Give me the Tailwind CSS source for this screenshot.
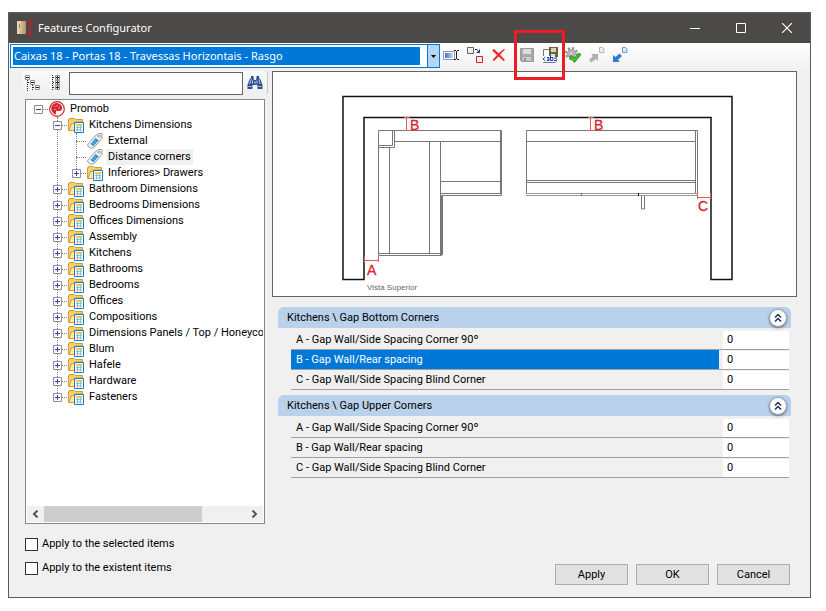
<!DOCTYPE html>
<html lang="en">
<head>
    <meta charset="UTF-8">
    <meta name="viewport" content="width=device-width, initial-scale=1.0">
    <title>Features Configurator</title>
    <script src="https://cdn.jsdelivr.net/npm/@tailwindcss/browser@4"></script>
</head>
<body class="bg-white h-screen min-h-[500px] pt-3 pb-[13px] pl-2 pr-[15px] font-[Roboto,'Liberation_Sans',sans-serif] text-[11px] leading-4 text-black">

    <!-- shared icons -->
    <svg class="hidden">
        <symbol id="folder" viewBox="0 0 16 16">
            <path d="M.5 13.500V2.500h1v-1h5l1 1h7v4" fill="#f7d06a" stroke="#d39a3c"/>
            <path d="M1 13.500 3.500 6.500h2.500l1-1.500h7.500v8.500z" fill="#fde9a3" stroke="#d39a3c"/>
            <path d="M6.500 5.500h9v10h-9z" fill="#fff" stroke="#1583bf"/>
            <path d="M8 7h6v2H8z" fill="#f5c24a"/>
            <path d="M9.500 9v5.500M12.500 9v5.500M8 10.500h6M8 13h6" stroke="#8fb9d8" fill="none"/>
        </symbol>
        <symbol id="tag" viewBox="0 0 16 16">
            <path d="M.8 11.500 8 3l4-2.500h2.500l.5.8v4L8 13.500l-3 1.700H3.500L.8 13z" fill="#f4f4f4" stroke="#8c8c8c" stroke-width=".9"/>
            <path d="m3.500 11 5-6 3.200 2.400-5.200 5.800z" fill="#2d8fd0"/>
            <path d="m5 9.300 3.200 2.400M6.700 7.300l3.200 2.400" stroke="#a9d5f2" stroke-width=".7"/>
            <circle cx="12.300" cy="3.300" r="1.100" fill="#fff" stroke="#888" stroke-width=".8"/>
        </symbol>
        <symbol id="promob" viewBox="0 0 16 16">
            <circle cx="8" cy="8" r="7.300" fill="#fff" stroke="#d2232f" stroke-width="1.200"/>
            <path d="M9 2.200c-4-.6-7 2.300-6.700 5.800.2 3 2.200 5.200 5 5.700-.8-1.500-.7-3 .3-4.200 1.300.8 3.500.9 4.700-.3 1.500-1.500 1.500-5.300-3.300-7z" fill="#d2232f"/>
            <path d="m5 5 1.500 1.200M8 3.800v2M11 5.200 9.500 6.500M5 8.500h1.700M10.500 8 9.200 7.500" stroke="#f6b6ba" stroke-width=".8"/>
        </symbol>
        <symbol id="chevrons" viewBox="0 0 16 16">
            <path d="m5 7.500 3-3 3 3M5 11.500l3-3 3 3" fill="none" stroke="#1c2f66" stroke-width="1.500"/>
        </symbol>
    </svg>

    <div class="relative h-full flex flex-col border border-[#5b5b5b] bg-[#f0f0f0]">

        <!-- title bar -->
        <header class="h-[30px] shrink-0 flex items-center bg-[#4c4a48] text-white">
            <svg class="w-4 h-4 ml-2" viewBox="0 0 16 16">
                <defs><linearGradient id="wood"><stop stop-color="#f2dcc0"/><stop offset="1" stop-color="#b58e62"/></linearGradient></defs>
                <path d="M0 1h9v13H0z" fill="url(#wood)"/>
                <path d="M2 4h1v4H2z" fill="#888"/>
                <path d="M11 1.500h5M11 14.500h5M13.500 2v12M11.500 4.500l2-2 2 2M11.500 11.500l2 2 2-2" fill="none" stroke="#e0101e"/>
            </svg>
            <h1 class="flex-1 ml-[5px] font-['Noto_Sans','Open_Sans',sans-serif]">Features Configurator</h1>
            <button class="w-[46px] h-full grid place-items-center" aria-label="Minimize">
                <svg class="w-[10px] h-[10px]" viewBox="0 0 10 10"><path d="M0 5.500h10" stroke="#fff"/></svg>
            </button>
            <button class="w-[46px] h-full grid place-items-center" aria-label="Maximize">
                <svg class="w-[10px] h-[10px]" viewBox="0 0 10 10"><path d="M.5.5h9v9h-9z" fill="none" stroke="#fff"/></svg>
            </button>
            <button class="w-[46px] h-full grid place-items-center" aria-label="Close">
                <svg class="w-[10px] h-[10px]" viewBox="0 0 10 10"><path d="m0 0 10 10M10 0 0 10" stroke="#fff" stroke-width="1.200"/></svg>
            </button>
        </header>

        <!-- main toolbar -->
        <div class="h-7 shrink-0 flex items-start pl-px bg-linear-to-b from-white to-[#f0f0f0]">
            <div class="flex w-[430px] h-6 mt-px border border-[#0078d7] bg-white">
                <select aria-label="Configuration" class="appearance-none flex-1 min-w-0 m-[2px] mr-[7px] bg-[#0078d7] text-white font-['Noto_Sans','Open_Sans',sans-serif] leading-4 px-px outline-none">
                    <option>Caixas 18 - Portas 18 - Travessas Horizontais - Rasgo</option>
                </select>
                <span class="w-3 grid place-items-center border-l border-[#0078d7] bg-[#b3d7f3]">
                    <svg class="w-[5px] h-[3px]" viewBox="0 0 5 3"><path d="M0 0h5L2.500 3z"/></svg>
                </span>
            </div>
            <div class="flex items-center gap-2 h-6 ml-[3px]">
                <button aria-label="Rename">
                    <svg class="w-4 h-4" viewBox="0 0 16 16">
                        <defs><linearGradient id="field"><stop stop-color="#3a73cf"/><stop offset="1" stop-color="#c4dafa"/></linearGradient></defs>
                        <path d="M.5 4.500h11v8H.5z" fill="#fff" stroke="#8a97ab"/>
                        <path d="M2 6h8v5H2z" fill="url(#field)"/>
                        <path d="M11 3.500h2M14 3.500h2M13.500 4v8M11 12.500h2M14 12.500h2" fill="none" stroke="#222"/>
                    </svg>
                </button>
                <button aria-label="Replace">
                    <svg class="w-4 h-4" viewBox="0 0 16 16">
                        <path d="M.5.5h6v6h-6z" fill="#eee" stroke="#6c6060"/>
                        <path d="M9.500 9.500h6v6h-6z" fill="#e8eef4" stroke="#e01b1b"/>
                        <path d="M8 2.500h2l1 1.500 1 1M12.500 2.500v3h-3" fill="none" stroke="#17375e"/>
                    </svg>
                </button>
                <button aria-label="Delete">
                    <svg class="w-4 h-4" viewBox="0 0 16 16">
                        <path d="M1 3.500 3 2l4.500 4.200L13 2l1 .5-5 5.300 5 5.200-1.500 1-5-4.500L3 14l-1.500-1L6 8z" fill="#ee2a24"/>
                    </svg>
                </button>
                <span class="w-px h-4 -ml-px bg-[#c8c8c8]"></span>
                <button aria-label="Save" class="-ml-1">
                    <svg class="w-4 h-4" viewBox="0 0 16 16">
                        <path d="M1.500 1.500h13v13h-12l-1-1z" fill="#a9a9a9" stroke="#999"/>
                        <path d="M4 2h8v5H4z" fill="#dcdcdc"/>
                        <path d="M4 10h8v4H4z" fill="#c9c9c9"/>
                        <path d="M5 11h2v3H5z" fill="#929292"/>
                    </svg>
                </button>
                <button aria-label="Save as" class="-ml-px">
                    <svg class="w-4 h-4" viewBox="0 0 16 16">
                        <path d="M1.500 2.500h13v12l-1 1h-12z" fill="#fff" stroke="#777"/>
                        <path d="M7 0h9v10H7z" fill="#66633f"/>
                        <path d="M9 1h5v4H9z" fill="#d8d4b4"/>
                        <path d="M9 7h4v2H9z" fill="#ddd"/>
                        <path d="M1 9h12v6H1z" fill="#fff"/>
                        <path d="M3.500 10 1 12l2.500 2M5 10.500h2v3H5M5 12h2M8.500 9v5M9 13.500h2v-3H9M14 11h-2M14 13.500h-2" fill="none" stroke="#1b3fd0"/>
                    </svg>
                </button>
                <button aria-label="Validate" class="-ml-px">
                    <svg class="w-4 h-4" viewBox="0 0 16 16">
                        <circle cx="6.500" cy="6.500" r="5.500" fill="none" stroke="#8c8c8c" stroke-width="2" stroke-dasharray="2.200 2.100"/>
                        <circle cx="6.500" cy="6.500" r="4" fill="#c8c8c8" stroke="#8c8c8c"/>
                        <circle cx="6.500" cy="6.500" r="1.700" fill="#f5f5f5" stroke="#8c8c8c"/>
                        <path d="m4.500 10 2-1.500L9.500 11 14 6l2 1.500-6.500 8z" fill="#45c02c" stroke="#1f7f18" stroke-width=".8"/>
                    </svg>
                </button>
                <button aria-label="Import">
                    <svg class="w-4 h-4" viewBox="0 0 16 16">
                        <path d="m0 13 4-4-2-2h7v7L7 12l-5 3.500z" fill="#b0b0b0"/>
                        <path d="M10.500.5h3l1.500 1.500v3.500h-4.500z" fill="#ededed" stroke="#b5b5b5"/>
                    </svg>
                </button>
                <button aria-label="Export" class="-ml-px">
                    <svg class="w-4 h-4" viewBox="0 0 16 16">
                        <path d="M1 8v7h7l-2-2 4-4-2.500-2.500L3.500 10z" fill="#2f7ad3"/>
                        <path d="M10.500.5h3l1.500 1.500v3.500h-4.500z" fill="#dce9fa" stroke="#6e9ad6"/>
                    </svg>
                </button>
            </div>
        </div>

        <!-- marker over the save buttons -->
        <div class="absolute left-[505px] top-[17px] w-[51px] h-[50px] border-3 border-[#ed1c24] pointer-events-none"></div>

        <main class="flex-1 min-h-0 flex gap-1 px-[13px]">

            <!-- left side: search + tree -->
            <section class="w-[246px] shrink-0 flex flex-col pb-4">
                <div class="h-6 flex items-center pl-[3px] rounded-r border-r border-[#c4c4c4] bg-linear-to-b from-[#fafafa] to-[#efefef]">
                    <button aria-label="Collapse all">
                        <svg class="w-4 h-4" viewBox="0 0 16 16" fill="#fff" stroke="#8a949e">
                            <path d="M.5.5h4v4h-4zM5.500 5.500h4v4h-4zM10.500 10.500h4v4h-4z"/>
                            <path d="M1 2.500h3M6 7.500h3M11 12.500h3" stroke="#222"/>
                            <path d="M2.500 5v11M3 7.500h2M7.500 10v6M8 12.500h2" stroke="#222" stroke-dasharray="1 1"/>
                        </svg>
                    </button>
                    <button aria-label="Expand all" class="ml-2">
                        <svg class="w-4 h-4" viewBox="0 0 16 16" fill="#fff" stroke="#8a949e">
                            <path d="M6.500.5h4v4h-4zM6.500 5.500h4v4h-4zM6.500 10.500h4v4h-4z"/>
                            <path d="M7 2.500h3M7 7.500h3M7 12.500h3M8.500 1v3M8.500 6v3M8.500 11v3" stroke="#222"/>
                            <path d="M3.500 0v16M4 2.500h2M4 7.500h2M4 12.500h2" stroke="#222" stroke-dasharray="1 1"/>
                        </svg>
                    </button>
                    <input type="text" aria-label="Search" class="flex-1 min-w-0 h-[23px] ml-1 px-1 border border-[#646464] bg-white">
                    <button aria-label="Find" class="mx-1">
                        <svg class="w-4 h-4" viewBox="0 0 16 16">
                            <path d="M4 1h2.500v2L7 5h2l.5-2V1H12v2l1.500 1.500L15.500 10v4h-5v-4h-5v4h-5v-4l2-5.500L4 3z" fill="#2c4f8f"/>
                            <path d="M4.500 4 2.500 9M12 4.500l1 4.500M1.500 11.500h3M11.500 11.500h3M5.500 5.500v3M10 5.500v3" stroke="#b8cdec" fill="none"/>
                            <path d="M7 6.500h2v2H7z" fill="#89a8d8"/>
                        </svg>
                    </button>
                </div>

                <div class="flex-1 min-h-0 mt-1 ml-[3px] mr-[3px] flex flex-col border border-[#828790] bg-white p-px">
                    <div id="tree" class="flex-1 min-h-0 overflow-hidden"></div>
                    <div class="h-4 shrink-0 flex items-center bg-[#f0f0f0]">
                        <button aria-label="Scroll left" class="w-[17px] grid place-items-center">
                            <svg class="w-[7px] h-2" viewBox="0 0 7 8"><path d="M5.500.5 2 4l3.500 3.500" fill="none" stroke="#555" stroke-width="2"/></svg>
                        </button>
                        <div class="flex-1 h-full"><div class="w-[78%] h-full bg-[#cdcdcd]"></div></div>
                        <button aria-label="Scroll right" class="w-[17px] grid place-items-center">
                            <svg class="w-[7px] h-2" viewBox="0 0 7 8"><path d="M1.500.5 5 4 1.500 7.500" fill="none" stroke="#555" stroke-width="2"/></svg>
                        </button>
                    </div>
                </div>

                <div class="mt-2 mb-px ml-[3px]">
                    <label class="flex items-center h-6 gap-1"><input type="checkbox" class="appearance-none w-[13px] h-[13px] border border-[#333] bg-white">Apply to the selected items</label>
                    <label class="flex items-center h-6 gap-1"><input type="checkbox" class="appearance-none w-[13px] h-[13px] border border-[#333] bg-white">Apply to the existent items</label>
                </div>
            </section>

            <!-- right side: preview + values -->
            <section class="flex-1 min-w-0 flex flex-col pb-3">
                <div class="shrink-0 border border-[#646464] bg-white">
                    <svg class="block w-full" viewBox="0 0 523 224" fill="none" font-family="'Liberation Sans', Arial, sans-serif">
                        <!-- walls -->
                        <path d="M70 24.500h389v183h-21v-162H91v162H70z" stroke="#111" stroke-width="1.500"/>
                        <!-- corner cabinet -->
                        <g stroke="#777">
                            <path d="M105.500 58.500h123v65h-60v60h-63z"/>
                            <path d="M121.500 69.500h106M167.500 69.500v114M156.500 69.500v112M116.500 75.500v106M105.500 181.500h62M227.500 59v63M167.500 109.500h60M167.500 121.500h61M169.500 123v60"/>
                            <path d="M105.500 75.500h16v-17M105.500 73.500h14v-15"/>
                        </g>
                        <!-- straight cabinet -->
                        <g stroke="#777">
                            <path d="M253.500 121.500v-63h171v63"/>
                            <path d="M422.500 59v62M254 69.500h168M254 108.500h168M254 110.500h168" />
                            <path d="M253 121.500h172M253 123.500h172" stroke="#999"/>
                            <path d="M308.500 121v3"/>
                            <path d="M365.500 121v3" stroke="#111"/>
                            <path d="M368.500 124v13h3v-13"/>
                        </g>
                        <path d="M131 45.500h6M133.500 45v13M131 58.500h6M315 45.500h6M317.500 45v13M315 58.500h6M91.500 184v6M91 188.500h14M105.500 184v6M424.500 121v6M425 125.500h13M437.500 121v6" stroke="#dc5a5a"/>
                        <g fill="#d8232a" stroke="#d8232a" stroke-width=".3" font-size="14">
                            <text x="137" y="58">B</text>
                            <text x="321" y="58">B</text>
                            <text x="94" y="203">A</text>
                            <text x="425" y="139">C</text>
                        </g>
                        <text x="94" y="218" fill="#666" font-size="8">Vista Superior</text>
                    </svg>
                </div>

                <div class="flex flex-col gap-[5px] pt-[10px] px-[6px]">
                    <section>
                        <div class="h-[21px] flex items-center justify-between pl-[9px] pr-1 rounded-t-md bg-[#b9d1ea]">
                            <h2>Kitchens \ Gap Bottom Corners</h2>
                            <button aria-label="Collapse group" class="w-[18px] h-[18px] rounded-full border border-[#9aa0b0] bg-white shadow-sm shadow-black/40">
                                <svg class="w-4 h-4"><use href="#chevrons"/></svg>
                            </button>
                        </div>
                        <table class="w-full mt-[2px] border-separate border-spacing-0 table-fixed">
                            <colgroup><col class="w-[13px]"><col><col class="w-[70px]"><col class="w-[2px]"></colgroup>
                            <tbody id="bottomCorners"></tbody>
                        </table>
                    </section>
                    <section>
                        <div class="h-[21px] flex items-center justify-between pl-[9px] pr-1 rounded-t-md bg-[#b9d1ea]">
                            <h2>Kitchens \ Gap Upper Corners</h2>
                            <button aria-label="Collapse group" class="w-[18px] h-[18px] rounded-full border border-[#9aa0b0] bg-white shadow-sm shadow-black/40">
                                <svg class="w-4 h-4"><use href="#chevrons"/></svg>
                            </button>
                        </div>
                        <table class="w-full mt-[2px] border-separate border-spacing-0 table-fixed">
                            <colgroup><col class="w-[13px]"><col><col class="w-[70px]"><col class="w-[2px]"></colgroup>
                            <tbody id="upperCorners"></tbody>
                        </table>
                    </section>
                </div>

                <footer class="mt-auto flex justify-end gap-2 pr-[7px]">
                    <button class="w-[73px] h-[21px] border border-[#adadad] bg-[#e1e1e1]">Apply</button>
                    <button class="w-[73px] h-[21px] border border-[#adadad] bg-[#e1e1e1]">OK</button>
                    <button class="w-[73px] h-[21px] border border-[#adadad] bg-[#e1e1e1]">Cancel</button>
                </footer>
            </section>
        </main>
    </div>

    <script>
        const treeData = [
            { name: 'Promob', icon: 'promob', children: [
                { name: 'Kitchens Dimensions', children: [
                    { name: 'External', icon: 'tag' },
                    { name: 'Distance corners', icon: 'tag', selected: true },
                    { name: 'Inferiores> Drawers', closed: true },
                ] },
                ...['Bathroom Dimensions', 'Bedrooms Dimensions', 'Offices Dimensions', 'Assembly', 'Kitchens',
                    'Bathrooms', 'Bedrooms', 'Offices', 'Compositions', 'Dimensions Panels / Top / Honeycomb',
                    'Blum', 'Hafele', 'Hardware', 'Fasteners'].map(name => ({ name, closed: true })),
            ] },
        ];

        function toggleBox(node) {
            if (node.icon === 'tag') {
                return '<span class="w-1 shrink-0"></span><span class="w-[10px] shrink-0 mr-px border-t border-dotted border-[#808080]"></span>';
            }
            const plus = node.closed ? 'M2 4.5h5M4.5 2v5' : 'M2 4.5h5';
            return `<button class="relative w-[9px] h-[9px] shrink-0" aria-label="Toggle ${node.name}">
                    <svg class="block w-[9px] h-[9px]" viewBox="0 0 9 9"><path d="M.5.5h8v8h-8z" fill="#fafafa" stroke="#919191"/><path d="${plus}" stroke="#2c4a9a"/></svg>
                </button><span class="w-[5px] shrink-0 mr-px border-t border-dotted border-[#808080]"></span>`;
        }

        function renderNodes(nodes, root) {
            const line = root ? '' : '<span class="absolute left-[11px] top-0 bottom-2 border-l border-dotted border-[#808080]"></span>';
            return `<ul class="relative ${root ? '' : 'ml-[19px]'}">${line}${nodes.map(node => `
                <li>
                    <div class="flex items-center h-4 pl-[7px] whitespace-nowrap">
                        ${toggleBox(node)}
                        <svg class="w-4 h-4 shrink-0"><use href="#${node.icon || 'folder'}"/></svg>
                        <span class="ml-[3px] px-[2px] ${node.selected ? 'bg-[#f0f0f0]' : ''}">${node.name}</span>
                    </div>
                    ${node.children ? renderNodes(node.children, false) : ''}
                </li>`).join('')}</ul>`;
        }

        document.getElementById('tree').innerHTML = renderNodes(treeData, true);

        const gaps = ['A - Gap Wall/Side Spacing Corner 90º', 'B - Gap Wall/Rear spacing', 'C - Gap Wall/Side Spacing Blind Corner'];

        function renderRows(id, active) {
            document.getElementById(id).innerHTML = gaps.map((gap, i) => `
                <tr class="h-5">
                    <td class="p-0"></td>
                    <td class="p-0 pl-[5px] border-b border-[#a0a0a0] ${i === active ? 'bg-[#0078d7] text-white' : ''}"><label for="${id}${i}">${gap}</label></td>
                    <td class="p-0 pl-1 border-b border-[#a0a0a0]"><input id="${id}${i}" type="text" value="0" class="block w-full h-[18px] pl-1 bg-white"></td>
                    <td class="p-0"></td>
                </tr>`).join('');
        }

        renderRows('bottomCorners', 1);
        renderRows('upperCorners', -1);
    </script>
</body>
</html>
